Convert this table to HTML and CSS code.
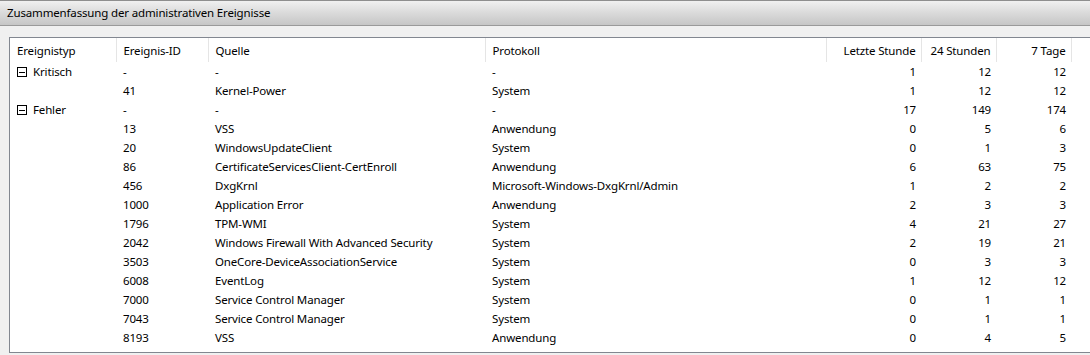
FILE: index.html
```html
<!DOCTYPE html>
<html lang="de">
<head>
<meta charset="utf-8">
<title>Zusammenfassung der administrativen Ereignisse</title>
<link rel="stylesheet" href="styles.css">
</head>
<body>
<div class="titlebar">Zusammenfassung der administrativen Ereignisse</div>
<div class="panel">
  <table class="grid">
    <colgroup>
      <col class="c1"><col class="c2"><col class="c3"><col class="c4"><col class="c5"><col class="c6"><col class="c7"><col>
    </colgroup>
    <thead>
      <tr>
        <th>Ereignistyp</th><th>Ereignis-ID</th><th>Quelle</th><th>Protokoll</th>
        <th class="num">Letzte Stunde</th><th class="num">24 Stunden</th><th class="num">7 Tage</th><th class="fill"></th>
      </tr>
    </thead>
    <tbody>
      <tr><td><span class="tog"></span>Kritisch</td><td>-</td><td>-</td><td>-</td><td class="num">1</td><td class="num">12</td><td class="num">12</td><td></td></tr>
      <tr><td></td><td>41</td><td>Kernel-Power</td><td>System</td><td class="num">1</td><td class="num">12</td><td class="num">12</td><td></td></tr>
      <tr><td><span class="tog"></span>Fehler</td><td>-</td><td>-</td><td>-</td><td class="num">17</td><td class="num">149</td><td class="num">174</td><td></td></tr>
      <tr><td></td><td>13</td><td>VSS</td><td>Anwendung</td><td class="num">0</td><td class="num">5</td><td class="num">6</td><td></td></tr>
      <tr><td></td><td>20</td><td>WindowsUpdateClient</td><td>System</td><td class="num">0</td><td class="num">1</td><td class="num">3</td><td></td></tr>
      <tr><td></td><td>86</td><td>CertificateServicesClient-CertEnroll</td><td>Anwendung</td><td class="num">6</td><td class="num">63</td><td class="num">75</td><td></td></tr>
      <tr><td></td><td>456</td><td>DxgKrnl</td><td>Microsoft-Windows-DxgKrnl/Admin</td><td class="num">1</td><td class="num">2</td><td class="num">2</td><td></td></tr>
      <tr><td></td><td>1000</td><td>Application Error</td><td>Anwendung</td><td class="num">2</td><td class="num">3</td><td class="num">3</td><td></td></tr>
      <tr><td></td><td>1796</td><td>TPM-WMI</td><td>System</td><td class="num">4</td><td class="num">21</td><td class="num">27</td><td></td></tr>
      <tr><td></td><td>2042</td><td>Windows Firewall With Advanced Security</td><td>System</td><td class="num">2</td><td class="num">19</td><td class="num">21</td><td></td></tr>
      <tr><td></td><td>3503</td><td>OneCore-DeviceAssociationService</td><td>System</td><td class="num">0</td><td class="num">3</td><td class="num">3</td><td></td></tr>
      <tr><td></td><td>6008</td><td>EventLog</td><td>System</td><td class="num">1</td><td class="num">12</td><td class="num">12</td><td></td></tr>
      <tr><td></td><td>7000</td><td>Service Control Manager</td><td>System</td><td class="num">0</td><td class="num">1</td><td class="num">1</td><td></td></tr>
      <tr><td></td><td>7043</td><td>Service Control Manager</td><td>System</td><td class="num">0</td><td class="num">1</td><td class="num">1</td><td></td></tr>
      <tr><td></td><td>8193</td><td>VSS</td><td>Anwendung</td><td class="num">0</td><td class="num">4</td><td class="num">5</td><td></td></tr>
    </tbody>
  </table>
</div>
</body>
</html>
```
FILE: styles.css
```css
html, body {
  margin: 0;
  padding: 0;
}
body {
  background: #f0f0f0;
  font-family: "Noto Sans", "Open Sans", sans-serif;
  font-size: 11.5px;
  letter-spacing: -0.15px;
  color: #000;
  width: 1090px;
  height: 355px;
  overflow: hidden;
}
.titlebar {
  height: 26px;
  box-sizing: border-box;
  border-top: 1px solid #8e8e8e;
  border-bottom: 1px solid #9a9a9a;
  background: linear-gradient(#f0f0f0, #dcdcdc 45%, #c6c6c6);
  padding-left: 7px;
  line-height: 23px;
  white-space: nowrap;
}
.panel {
  margin: 11px 0 0 9px;
  height: 316px;
  width: 1100px;
  box-sizing: border-box;
  border: 1px solid #828790;
  border-right: none;
  background: #fff;
}
.grid {
  border-collapse: collapse;
  table-layout: fixed;
  width: 1100px;
}
.c1 { width: 106px; }
.c2 { width: 92px; }
.c3 { width: 277px; }
.c4 { width: 341px; }
.c5 { width: 95px; }
.c6 { width: 75px; }
.c7 { width: 75px; }
.grid th {
  height: 24px;
  padding: 0 5px 0 7px;
  font-weight: normal;
  text-align: left;
  border-right: 1px solid #e5e5e5;
  box-sizing: border-box;
  white-space: nowrap;
}
.grid th.fill { border-right: none; }
.grid td {
  height: 19px;
  padding: 0 5px 0 7px;
  white-space: nowrap;
  overflow: hidden;
}
.grid .num { text-align: right; }
.tog {
  display: inline-block;
  width: 10px;
  height: 10px;
  box-sizing: border-box;
  border: 1px solid #000;
  margin-right: 6px;
  vertical-align: -1px;
  position: relative;
}
.tog::after {
  content: "";
  position: absolute;
  left: 1px;
  right: 1px;
  top: 3.5px;
  height: 1px;
  background: #000;
}
```
